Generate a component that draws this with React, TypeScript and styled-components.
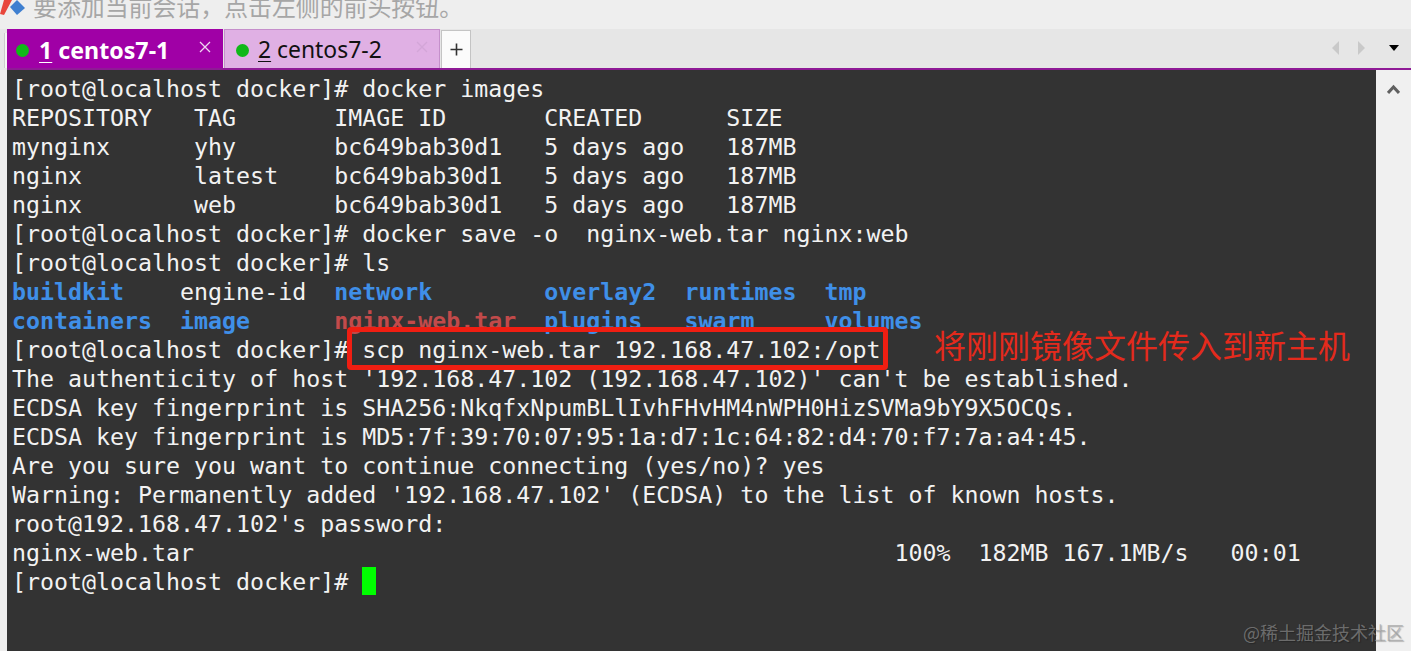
import React from 'react';
import styled, { createGlobalStyle } from 'styled-components';

const GlobalStyle = createGlobalStyle`
	html, body {
		margin: 0;
		padding: 0;
		width: 1411px;
		height: 651px;
		overflow: hidden;
		background: #e6e6e6;
	}
`;

const Window = styled.div`
	width: 1411px;
	height: 651px;
	display: flex;
	flex-direction: column;
	position: relative;
	overflow: hidden;
	background: #e6e6e6;
	font-family: "Noto Sans", "Noto Sans CJK SC", sans-serif;
`;

const NoticeBar = styled.div`
	height: 29px;
	flex: none;
	display: flex;
	align-items: flex-start;
	gap: 8px;
	background: #eeeeee;
	overflow: hidden;
`;

const NoticeIcon = styled.svg`
	width: 25px;
	height: 18px;
	flex: none;
`;

const NoticeText = styled.span`
	font-family: "Noto Sans CJK SC", sans-serif;
	font-size: 23.9px;
	line-height: 12px;
	color: #a6a6a6;
	white-space: nowrap;
`;

const TabRow = styled.div`
	height: 39px;
	flex: none;
	display: flex;
	align-items: stretch;
	padding-left: 4px;
	background: #e6e6e6;
`;

const EdgeRule = styled.div`
	width: 3px;
	flex: none;
	box-sizing: border-box;
	margin-top: 4px;
	border-left: 1px solid #cccccc;
	background: #f6f6f6;
`;

const Tab = styled.div<{ $active?: boolean }>`
	width: 216px;
	box-sizing: border-box;
	margin-right: 1px;
	display: flex;
	align-items: center;
	padding: 2px 9px 0 ${(props) => (props.$active ? 8 : 11)}px;
	gap: ${(props) => (props.$active ? 10 : 9)}px;
	background: ${(props) => (props.$active ? '#a000a6' : '#e0b0e4')};
	border: 1px solid ${(props) => (props.$active ? '#a000a6' : '#c58fcb')};
	border-bottom: none;
	color: ${(props) => (props.$active ? '#ffffff' : '#111111')};
	font-size: ${(props) => (props.$active ? 23.2 : 22.9)}px;
	font-weight: ${(props) => (props.$active ? 700 : 400)};
`;

const StatusDot = styled.span`
	width: 13px;
	height: 13px;
	border-radius: 50%;
	background: #10b818;
	flex: none;
`;

const TabLabel = styled.span`
	flex: 1;
	white-space: pre;
	line-height: 32px;
`;

const TabKey = styled.span`
	text-decoration: underline;
	text-underline-offset: 3px;
	text-decoration-thickness: 1px;
`;

const CloseIcon = styled.svg<{ $dim?: boolean }>`
	width: 12px;
	height: 12px;
	flex: none;
	margin: 0 2px 6px 0;
	stroke: ${(props) => (props.$dim ? '#d3a6d8' : '#f0d8f2')};
	stroke-width: 1.3;
`;

const AddTab = styled.div`
	width: 30px;
	box-sizing: border-box;
	margin-top: 1px;
	display: flex;
	align-items: center;
	justify-content: center;
	background: #fbfbfb;
	border: 1px solid #c4c4c4;
	border-bottom: none;
`;

const AddIcon = styled.svg`
	width: 13px;
	height: 13px;
	stroke: #333333;
	stroke-width: 1.6;
`;

const TabNav = styled.div`
	margin-left: auto;
	display: flex;
	align-items: center;
	padding: 0 12px 2px 0;
`;

const NavArrow = styled.svg<{ $gap: number }>`
	width: 8px;
	height: 14px;
	margin-right: ${(props) => props.$gap}px;
	fill: #c9c9c9;
`;

const MenuCaret = styled.svg`
	width: 10px;
	height: 6px;
	fill: #000000;
`;

const Divider = styled.div`
	height: 2px;
	flex: none;
	margin-left: 7px;
	background: #8f1a96;
`;

const Body = styled.div`
	flex: 1;
	min-height: 0;
	display: flex;
	padding-left: 7px;
	background: #eeeeee;
`;

const Terminal = styled.div`
	flex: 1;
	min-width: 0;
	box-sizing: border-box;
	padding: 4px 0 0 5px;
	background: #333333;
	color: #f2f2f2;
	font-family: "DejaVu Sans Mono", monospace;
	font-size: 23.27px;
`;

const Line = styled.div`
	height: 29px;
	line-height: 29px;
	white-space: pre;
`;

const Dir = styled.span`
	color: #3f8fe8;
	font-weight: 700;
`;

const Archive = styled.span`
	color: #c24a4a;
	font-weight: 700;
`;

const Cursor = styled.span`
	display: inline-block;
	width: 14px;
	height: 28px;
	vertical-align: top;
	background: #00ff00;
`;

const Scrollbar = styled.div`
	width: 35px;
	flex: none;
	display: flex;
	justify-content: center;
	padding-top: 14px;
	box-sizing: border-box;
	background: #f0f0f0;
`;

const ScrollUp = styled.svg`
	width: 13px;
	height: 10px;
	fill: none;
	stroke: #606060;
	stroke-width: 3;
`;

const Highlight = styled.div`
	position: absolute;
	left: 347px;
	top: 327px;
	width: 541px;
	height: 43px;
	box-sizing: border-box;
	border: 5px solid #f01e12;
	border-radius: 4px;
`;

const Annotation = styled.div`
	position: absolute;
	left: 934px;
	top: 323px;
	font-family: "Noto Sans CJK SC", sans-serif;
	font-size: 32px;
	line-height: 42px;
	color: #e42a1c;
	white-space: nowrap;
`;

const Watermark = styled.div`
	position: absolute;
	left: 1243px;
	top: 620px;
	font-family: "Noto Sans CJK SC", sans-serif;
	font-size: 18px;
	line-height: 24px;
	color: rgba(150, 150, 150, 0.62);
	text-shadow: 1px 1px 1px rgba(0, 0, 0, 0.25);
	white-space: nowrap;
`;

const App = () => {
	return (
		<Window>
			<GlobalStyle />
			<NoticeBar>
				<NoticeIcon viewBox="0 0 25 18">
					<path d="M0 14 L4 0 L12 0 L4 15 Z" fill="#e8463c" />
					<path d="M10 7 L17 0 L25 8 L17 15 Z" fill="#3f7fd0" />
				</NoticeIcon>
				<NoticeText>要添加当前会话，点击左侧的前头按钮。</NoticeText>
			</NoticeBar>
			<TabRow>
				<EdgeRule />
				<Tab $active>
					<StatusDot />
					<TabLabel><TabKey>1</TabKey> centos7-1</TabLabel>
					<CloseIcon viewBox="0 0 12 12" aria-hidden="true">
						<path d="M1 1 L11 11 M11 1 L1 11" />
					</CloseIcon>
				</Tab>
				<Tab>
					<StatusDot />
					<TabLabel><TabKey>2</TabKey> centos7-2</TabLabel>
					<CloseIcon $dim viewBox="0 0 12 12" aria-hidden="true">
						<path d="M1 1 L11 11 M11 1 L1 11" />
					</CloseIcon>
				</Tab>
				<AddTab>
					<AddIcon viewBox="0 0 13 13" aria-hidden="true">
						<path d="M6.5 0.5 V12.5 M0.5 6.5 H12.5" />
					</AddIcon>
				</AddTab>
				<TabNav>
					<NavArrow $gap={17} viewBox="0 0 8 14" aria-hidden="true">
						<path d="M7 0 V14 L0 7 Z" />
					</NavArrow>
					<NavArrow $gap={24} viewBox="0 0 8 14" aria-hidden="true">
						<path d="M1 0 V14 L8 7 Z" />
					</NavArrow>
					<MenuCaret viewBox="0 0 10 6" aria-hidden="true">
						<path d="M0 0 H10 L5 6 Z" />
					</MenuCaret>
				</TabNav>
			</TabRow>
			<Divider />
			<Body>
				<Terminal>
					<Line>[root@localhost docker]# docker images</Line>
					<Line>REPOSITORY   TAG       IMAGE ID       CREATED      SIZE</Line>
					<Line>mynginx      yhy       bc649bab30d1   5 days ago   187MB</Line>
					<Line>nginx        latest    bc649bab30d1   5 days ago   187MB</Line>
					<Line>nginx        web       bc649bab30d1   5 days ago   187MB</Line>
					<Line>[root@localhost docker]# docker save -o  nginx-web.tar nginx:web</Line>
					<Line>[root@localhost docker]# ls</Line>
					<Line>
						<Dir>buildkit</Dir>{'    engine-id  '}<Dir>network</Dir>{'        '}<Dir>overlay2</Dir>{'  '}<Dir>runtimes</Dir>{'  '}<Dir>tmp</Dir>
					</Line>
					<Line>
						<Dir>containers</Dir>{'  '}<Dir>image</Dir>{'      '}<Archive>nginx-web.tar</Archive>{'  '}<Dir>plugins</Dir>{'   '}<Dir>swarm</Dir>{'     '}<Dir>volumes</Dir>
					</Line>
					<Line>[root@localhost docker]# scp nginx-web.tar 192.168.47.102:/opt</Line>
					<Line>The authenticity of host '192.168.47.102 (192.168.47.102)' can't be established.</Line>
					<Line>ECDSA key fingerprint is SHA256:NkqfxNpumBLlIvhFHvHM4nWPH0HizSVMa9bY9X5OCQs.</Line>
					<Line>ECDSA key fingerprint is MD5:7f:39:70:07:95:1a:d7:1c:64:82:d4:70:f7:7a:a4:45.</Line>
					<Line>Are you sure you want to continue connecting (yes/no)? yes</Line>
					<Line>Warning: Permanently added '192.168.47.102' (ECDSA) to the list of known hosts.</Line>
					<Line>root@192.168.47.102's password:</Line>
					<Line>nginx-web.tar                                                  100%  182MB 167.1MB/s   00:01</Line>
					<Line>[root@localhost docker]# <Cursor /></Line>
				</Terminal>
				<Scrollbar>
					<ScrollUp viewBox="0 0 13 10" aria-hidden="true">
						<path d="M1 9 L6.5 3 L12 9" />
					</ScrollUp>
				</Scrollbar>
			</Body>
			<Highlight />
			<Annotation>将刚刚镜像文件传入到新主机</Annotation>
			<Watermark>@稀土掘金技术社区</Watermark>
		</Window>
	);
};

export default App;
